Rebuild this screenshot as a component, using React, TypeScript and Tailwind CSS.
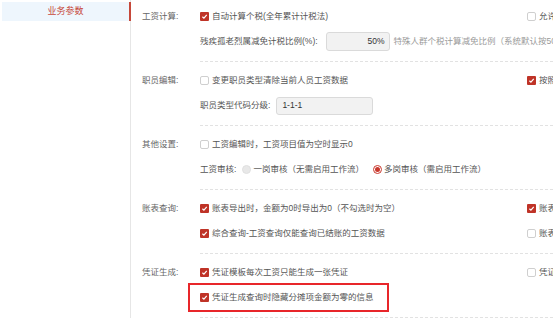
import React from 'react';

const Check = ({ on }: { on?: boolean }) =>
    on ? (
        <span className="w-[9px] h-[9px] rounded-[1px] bg-[#bf3327] flex items-center justify-center shrink-0">
            <svg viewBox="0 0 10 10" className="w-[7px] h-[7px]">
                <path d="M2 5.3 L4.2 7.3 L8.2 2.8" stroke="white" strokeWidth="1.7" fill="none" />
            </svg>
        </span>
    ) : (
        <span className="w-[9px] h-[9px] rounded-[2px] border border-[#cfcfcf] bg-white shrink-0" />
    );

const Radio = ({ on }: { on?: boolean }) =>
    on ? (
        <span className="w-[9px] h-[9px] rounded-full border border-[#c9372c] bg-white flex items-center justify-center shrink-0">
            <span className="w-[5px] h-[5px] rounded-full bg-[#c9372c]" />
        </span>
    ) : (
        <span className="w-[9px] h-[9px] rounded-full bg-[#e8e8e8] border border-[#e0e0e0] shrink-0" />
    );

const Opt = ({ on, text }: { on?: boolean; text: string }) => (
    <div className="flex items-center gap-[3px] whitespace-nowrap">
        <Check on={on} />
        <span>{text}</span>
    </div>
);

const Row = ({ left, right }: { left: React.ReactNode; right?: React.ReactNode }) => (
    <div className="flex items-center h-[25px]">
        <div className="w-[327px] shrink-0 flex items-center">{left}</div>
        <div className="flex-1 flex items-center overflow-hidden">{right}</div>
    </div>
);

const Section = ({ label, first, children }: { label: string; first?: boolean; children: React.ReactNode }) => (
    <div className="flex">
        <div className={`w-[69px] shrink-0 pl-[11px] ${first ? 'pt-[4px]' : 'pt-[6px]'}`}>
            <div className="h-[25px] flex items-center text-[#666]">{label}</div>
        </div>
        <div className={`flex-1 min-w-0 border-b border-dashed border-[#e2e2e2] pb-[7px] ${first ? 'pt-[4px]' : 'pt-[6px]'}`}>
            {children}
        </div>
    </div>
);

export default function App() {
    return (
        <div className="w-full h-screen overflow-hidden bg-white flex font-['Liberation_Sans','Noto_Sans_CJK_SC',sans-serif] text-[8.5px] leading-none text-[#555]">
            {/* Sidebar */}
            <div className="w-[131px] shrink-0 border-r border-[#e6e6e6]">
                <div className="mt-[2px] ml-[2px] -mr-px h-[19px] bg-[#eef6fd] border-r-2 border-[#c6483a] flex items-center justify-center text-[9px] text-[#c6483a]">
                    业务参数
                </div>
            </div>

            {/* Settings */}
            <div className="flex-1 min-w-0">
                <Section label="工资计算:" first>
                    <Row left={<Opt on text="自动计算个税(全年累计计税法)" />} right={<Opt text="允许修改个税" />} />
                    <div className="flex items-center h-[25px] whitespace-nowrap">
                        <span>残疾孤老烈属减免计税比例(%):</span>
                        <div className="ml-[8px] w-[64px] h-[19px] shrink-0 rounded-[3px] border border-[#dadada] bg-[#f2f2f2] flex items-center justify-end pr-[4px] text-[#333]">
                            50%
                        </div>
                        <span className="ml-[4px] text-[#9a9a9a]">特殊人群个税计算减免比例（系统默认按50%计算）</span>
                    </div>
                </Section>

                <Section label="职员编辑:">
                    <Row left={<Opt text="变更职员类型清除当前人员工资数据" />} right={<Opt on text="按照职员类型" />} />
                    <div className="flex items-center h-[25px] whitespace-nowrap">
                        <span>职员类型代码分级:</span>
                        <div className="ml-[6px] w-[97px] h-[18px] shrink-0 rounded-[3px] border border-[#dadada] bg-[#f2f2f2] flex items-center pl-[5px] text-[#333]">
                            1-1-1
                        </div>
                    </div>
                </Section>

                <Section label="其他设置:">
                    <Row left={<Opt text="工资编辑时，工资项目值为空时显示0" />} />
                    <div className="flex items-center h-[25px] whitespace-nowrap">
                        <span>工资审核:</span>
                        <div className="ml-[6px] flex items-center gap-[2px]">
                            <Radio />
                            <span>一岗审核（无需启用工作流）</span>
                        </div>
                        <div className="ml-[9px] flex items-center gap-[2px]">
                            <Radio on />
                            <span>多岗审核（需启用工作流）</span>
                        </div>
                    </div>
                </Section>

                <Section label="账表查询:">
                    <Row left={<Opt on text="账表导出时，金额为0时导出为0（不勾选时为空）" />} right={<Opt on text="账表显示" />} />
                    <Row left={<Opt on text="综合查询-工资查询仅能查询已结账的工资数据" />} right={<Opt text="账表查询" />} />
                </Section>

                <Section label="凭证生成:">
                    <Row left={<Opt on text="凭证模板每次工资只能生成一张凭证" />} right={<Opt text="凭证生成" />} />
                    <div className="relative">
                        <Row left={<Opt on text="凭证生成查询时隐藏分摊项金额为零的信息" />} />
                        <div className="absolute left-[-12px] top-[-2px] w-[201px] h-[29px] border-2 border-[#e8262a] pointer-events-none" />
                    </div>
                </Section>
            </div>
        </div>
    );
}
